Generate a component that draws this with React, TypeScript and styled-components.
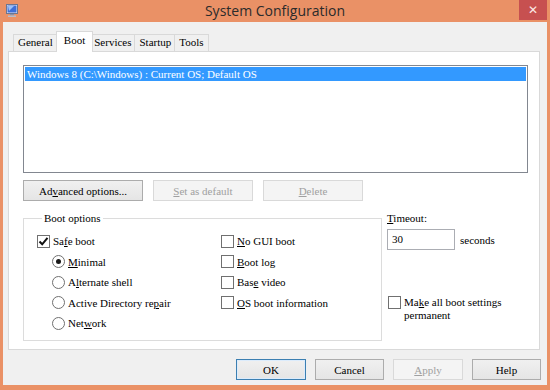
import styled, { createGlobalStyle } from "styled-components";

const GlobalStyle = createGlobalStyle`
  html, body {
    margin: 0;
    padding: 0;
    background: #ffffff;
  }
  * {
    box-sizing: border-box;
  }
`;

const Window = styled.div`
  width: 550px;
  height: 390px;
  background: #ea9166;
  display: flex;
  flex-direction: column;
  padding: 0 3px 5px 3px;
  font-family: "Liberation Serif", "Times New Roman", serif;
  font-size: 11px;
  color: #000;
`;

const TitleBar = styled.div`
  height: 22px;
  display: grid;
  grid-template-columns: 28px 1fr 28px;
  align-items: start;
`;

const AppIcon = styled.div`
  padding: 4px 0 0 3px;
  display: flex;
`;

const Title = styled.div`
  text-align: center;
  font-family: "Open Sans", "Noto Sans", sans-serif;
  font-size: 14px;
  line-height: 22px;
  color: #2b2b2b;
`;

const CloseButton = styled.div`
  height: 20px;
  background: #c75050;
  color: #fbe7e7;
  display: flex;
  align-items: center;
  justify-content: center;
  font-family: "DejaVu Sans", sans-serif;
  font-size: 12px;
  font-weight: bold;
`;

const Body = styled.div`
  flex: 1;
  background: #f0f0f0;
  display: flex;
  flex-direction: column;
  padding: 9px 7px 0 5px;
`;

const TabStrip = styled.div`
  display: flex;
  align-items: flex-end;
  height: 21px;
  padding-left: 5px;
  margin-bottom: -1px;
  position: relative;
  z-index: 1;
`;

const Tab = styled.div<{ $active?: boolean }>`
  height: ${(p) => (p.$active ? "21px" : "18px")};
  padding: ${(p) => (p.$active ? "2px 7px 0" : "1px 4px 0")};
  margin: ${(p) => (p.$active ? "0 -2px" : "0")};
  background: ${(p) => (p.$active ? "#ffffff" : "#f0f0f0")};
  border: 1px solid #d9d9d9;
  border-bottom: ${(p) => (p.$active ? "none" : "1px solid #d9d9d9")};
  position: relative;
  z-index: ${(p) => (p.$active ? 2 : 1)};
  & + & {
    margin-left: ${(p) => (p.$active ? "-2px" : "-1px")};
  }
`;

const Panel = styled.div`
  height: 299px;
  background: #ffffff;
  border: 1px solid #d9d9d9;
  padding: 13px 11px 0 14px;
  display: flex;
  flex-direction: column;
`;

const ListBox = styled.div`
  height: 108px;
  border: 1px solid #828790;
  background: #fff;
  padding: 1px;
`;

const ListRow = styled.div<{ $selected?: boolean }>`
  height: 14px;
  line-height: 14px;
  padding-left: 2px;
  background: ${(p) => (p.$selected ? "#3399ff" : "transparent")};
  color: ${(p) => (p.$selected ? "#fff" : "#000")};
  white-space: nowrap;
`;

const ActionRow = styled.div`
  display: flex;
  gap: 10px;
  margin-top: 7px;
`;

const Button = styled.div<{ $width: number; $disabled?: boolean; $default?: boolean }>`
  width: ${(p) => p.$width}px;
  height: 21px;
  display: flex;
  align-items: center;
  justify-content: center;
  border: 1px solid
    ${(p) => (p.$default ? "#3c7fb1" : p.$disabled ? "#d9d9d9" : "#acacac")};
  background: ${(p) =>
    p.$disabled
      ? "#f4f4f4"
      : "linear-gradient(#f0f0f0, #e5e5e5)"};
  color: ${(p) => (p.$disabled ? "#a0a0a0" : "#000")};
  box-shadow: ${(p) => (p.$default ? "inset 0 0 0 1px #dcecfc" : "none")};
`;

const LowerArea = styled.div`
  display: flex;
  margin-top: 11px;
`;

const Group = styled.fieldset`
  width: 359px;
  height: 129px;
  margin: 0;
  padding: 6px 0 0 13px;
  border: 1px solid #dcdcdc;
  display: grid;
  grid-template-columns: 184px 1fr;
`;

const GroupTitle = styled.legend`
  padding: 0 2px;
  margin-left: 5px;
  line-height: 13px;
`;

const OptionColumn = styled.div`
  display: grid;
  grid-auto-rows: 20.5px;
  align-content: start;
`;

const Option = styled.div<{ $indent?: boolean }>`
  display: flex;
  align-items: center;
  gap: 3px;
  padding-left: ${(p) => (p.$indent ? "15px" : "0")};
  white-space: nowrap;
`;

const Box = styled.span`
  width: 13px;
  height: 13px;
  border: 1px solid #707070;
  background: #fff;
  display: flex;
  align-items: center;
  justify-content: center;
  flex: none;
`;

const Radio = styled.span`
  width: 13px;
  height: 13px;
  border: 1px solid #707070;
  border-radius: 50%;
  background: #fff;
  display: flex;
  align-items: center;
  justify-content: center;
  flex: none;
`;

const Dot = styled.span`
  width: 5px;
  height: 5px;
  border-radius: 50%;
  background: #1a1a1a;
`;

const SideColumn = styled.div`
  margin-left: 5px;
  display: flex;
  flex-direction: column;
`;

const SideLabel = styled.div`
  line-height: 13px;
`;

const TimeoutRow = styled.div`
  display: flex;
  align-items: center;
  gap: 5px;
  margin-top: 4px;
`;

const TextInput = styled.div`
  width: 68px;
  height: 21px;
  border: 1px solid #abadb3;
  background: #fff;
  padding-left: 4px;
  line-height: 19px;
`;

const PermanentRow = styled.div`
  display: flex;
  align-items: flex-start;
  gap: 3px;
  margin-top: 46px;
  padding-left: 1px;
  line-height: 13px;
`;

const Footer = styled.div`
  display: flex;
  justify-content: flex-end;
  gap: 9px;
  padding-top: 9px;
  margin-right: -1px;
`;

const U = styled.span`
  text-decoration: underline;
`;

function CheckMark() {
  return (
    <svg width="11" height="11" viewBox="0 0 11 11">
      <path d="M1.5 5.5 L4.2 8.3 L9.5 1.8" fill="none" stroke="#111" strokeWidth="2" />
    </svg>
  );
}

function MonitorIcon() {
  return (
    <svg width="12" height="13" viewBox="0 0 12 13">
      <rect x="0.5" y="0.5" width="11" height="9" fill="#e6e9f2" stroke="#6d7690" />
      <rect x="1.5" y="1.5" width="9" height="7" fill="#3f6fd8" />
      <path d="M2 2 L8 2 L3 7 Z" fill="#9cc0f5" />
      <rect x="4" y="10" width="4" height="1.5" fill="#8c93a8" />
      <rect x="2" y="11.5" width="8" height="1.5" fill="#b8bdcc" />
    </svg>
  );
}

export default function App() {
  return (
    <>
      <GlobalStyle />
      <Window>
        <TitleBar>
          <AppIcon>
            <MonitorIcon />
          </AppIcon>
          <Title>System Configuration</Title>
          <CloseButton>✕</CloseButton>
        </TitleBar>
        <Body>
          <TabStrip>
            <Tab>General</Tab>
            <Tab $active>Boot</Tab>
            <Tab>Services</Tab>
            <Tab>Startup</Tab>
            <Tab>Tools</Tab>
          </TabStrip>
          <Panel>
            <ListBox>
              <ListRow $selected>Windows 8 (C:\Windows) : Current OS; Default OS</ListRow>
            </ListBox>
            <ActionRow>
              <Button $width={120}>
                <span>
                  Ad<U>v</U>anced options...
                </span>
              </Button>
              <Button $width={100} $disabled>
                <span>
                  <U>S</U>et as default
                </span>
              </Button>
              <Button $width={100} $disabled>
                <span>
                  <U>D</U>elete
                </span>
              </Button>
            </ActionRow>
            <LowerArea>
              <Group>
                <GroupTitle>Boot options</GroupTitle>
                <OptionColumn>
                  <Option>
                    <Box>
                      <CheckMark />
                    </Box>
                    <span>
                      Sa<U>f</U>e boot
                    </span>
                  </Option>
                  <Option $indent>
                    <Radio>
                      <Dot />
                    </Radio>
                    <span>
                      <U>M</U>inimal
                    </span>
                  </Option>
                  <Option $indent>
                    <Radio />
                    <span>
                      A<U>l</U>ternate shell
                    </span>
                  </Option>
                  <Option $indent>
                    <Radio />
                    <span>
                      Active Directory re<U>p</U>air
                    </span>
                  </Option>
                  <Option $indent>
                    <Radio />
                    <span>
                      Net<U>w</U>ork
                    </span>
                  </Option>
                </OptionColumn>
                <OptionColumn>
                  <Option>
                    <Box />
                    <span>
                      <U>N</U>o GUI boot
                    </span>
                  </Option>
                  <Option>
                    <Box />
                    <span>
                      <U>B</U>oot log
                    </span>
                  </Option>
                  <Option>
                    <Box />
                    <span>
                      Bas<U>e</U> video
                    </span>
                  </Option>
                  <Option>
                    <Box />
                    <span>
                      <U>O</U>S boot information
                    </span>
                  </Option>
                </OptionColumn>
              </Group>
              <SideColumn>
                <SideLabel>
                  <U>T</U>imeout:
                </SideLabel>
                <TimeoutRow>
                  <TextInput>30</TextInput>
                  <span>seconds</span>
                </TimeoutRow>
                <PermanentRow>
                  <Box />
                  <span>
                    Ma<U>k</U>e all boot settings
                    <br />
                    permanent
                  </span>
                </PermanentRow>
              </SideColumn>
            </LowerArea>
          </Panel>
          <Footer>
            <Button $width={70} $default>
              OK
            </Button>
            <Button $width={69}>Cancel</Button>
            <Button $width={70} $disabled>
              <span>
                <U>A</U>pply
              </span>
            </Button>
            <Button $width={69}>Help</Button>
          </Footer>
        </Body>
      </Window>
    </>
  );
}
